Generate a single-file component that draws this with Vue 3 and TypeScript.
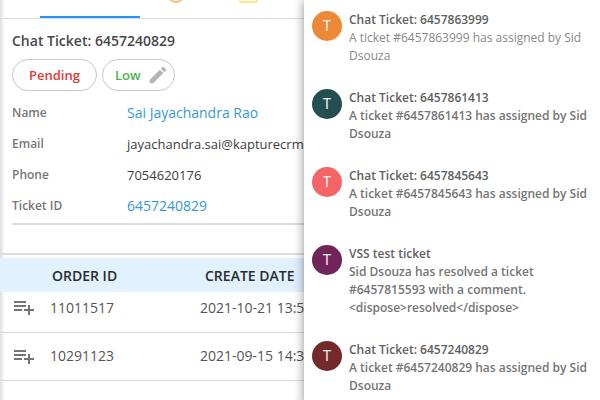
<script setup lang="ts">
interface Order {
  id: string
  created: string
}

interface Notice {
  title: string
  text: string
  color: string
  read?: boolean
}

const orders: Order[] = [
  { id: '11011517', created: '2021-10-21 13:5' },
  { id: '10291123', created: '2021-09-15 14:3' },
]

const notices: Notice[] = [
  { title: 'Chat Ticket: 6457863999', text: 'A ticket #6457863999 has assigned by Sid Dsouza', color: '#ed8936', read: true },
  { title: 'Chat Ticket: 6457861413', text: 'A ticket #6457861413 has assigned by Sid Dsouza', color: '#234e52' },
  { title: 'Chat Ticket: 6457845643', text: 'A ticket #6457845643 has assigned by Sid Dsouza', color: '#f56565' },
  { title: 'VSS test ticket', text: 'Sid Dsouza has resolved a ticket #6457815593 with a comment. <dispose>resolved</dispose>', color: '#702459' },
  { title: 'Chat Ticket: 6457240829', text: 'A ticket #6457240829 has assigned by Sid Dsouza', color: '#742a2a' },
]
</script>

<template>
  <div class="page">
    <main class="ticket">
      <nav class="tabs">
        <a href="#" class="tab active" aria-label="Details"></a>
        <a href="#" class="tab" aria-label="History">
          <svg class="tab-icon" width="20" height="20" viewBox="0 0 20 20" fill="none" stroke="#ffbd75" stroke-width="2">
            <circle cx="10" cy="10" r="8" />
            <path d="M10 5v5l3 2" />
          </svg>
        </a>
        <a href="#" class="tab" aria-label="Notes">
          <svg class="tab-icon" width="20" height="20" viewBox="0 0 20 20" fill="none" stroke="#ffe68a" stroke-width="2">
            <rect x="2" y="2" width="17" height="16" rx="1" />
          </svg>
        </a>
      </nav>

      <section class="summary">
        <h1>Chat Ticket: 6457240829</h1>
        <div class="pills">
          <button type="button" class="pill pending">Pending</button>
          <button type="button" class="pill low">
            Low
            <svg width="22" height="22" viewBox="0 0 24 24" fill="#b5b5b5">
              <path d="M3 17.25V21h3.75L17.81 9.94l-3.75-3.75L3 17.25zM20.71 7.04a1 1 0 0 0 0-1.41l-2.34-2.34a1 1 0 0 0-1.41 0l-1.83 1.83 3.75 3.75 1.83-1.83z" />
            </svg>
          </button>
        </div>
        <dl class="details">
          <dt>Name</dt>
          <dd><a href="#">Sai Jayachandra Rao</a></dd>
          <dt>Email</dt>
          <dd class="plain">jayachandra.sai@kapturecrm.</dd>
          <dt>Phone</dt>
          <dd class="plain">7054620176</dd>
          <dt>Ticket ID</dt>
          <dd><a href="#">6457240829</a></dd>
        </dl>
      </section>

      <section class="orders">
        <table>
          <thead>
            <tr>
              <th class="action"></th>
              <th class="order">ORDER ID</th>
              <th class="date">CREATE DATE</th>
            </tr>
          </thead>
          <tbody>
            <tr v-for="order in orders" :key="order.id">
              <td class="action">
                <button type="button" class="add" aria-label="Add order">
                  <svg width="24" height="24" viewBox="0 0 24 24" fill="#757575">
                    <path d="M14 10H2v2h12v-2zm0-4H2v2h12V6zm4 8v-4h-2v4h-4v2h4v4h2v-4h4v-2h-4zM2 16h8v-2H2v2z" />
                  </svg>
                </button>
              </td>
              <td class="order">{{ order.id }}</td>
              <td class="date">{{ order.created }}</td>
            </tr>
          </tbody>
        </table>
      </section>
    </main>

    <aside class="notices">
      <article v-for="notice in notices" :key="notice.title" class="notice" :class="{ read: notice.read }">
        <span class="avatar" :style="{ background: notice.color }">T</span>
        <div class="body">
          <h2>{{ notice.title }}</h2>
          <p>{{ notice.text }}</p>
        </div>
      </article>
    </aside>
  </div>
</template>

<style>
body {
  margin: 0;
}
</style>

<style scoped>
.page {
  display: grid;
  grid-template-columns: minmax(0, 38fr) minmax(0, 37fr);
  height: 100vh;
  overflow: hidden;
  background: #fff;
  color: #3c3c3c;
  font-family: "Open Sans", "Noto Sans", sans-serif;
}

a {
  color: #3498db;
  text-decoration: none;
}

h1,
h2,
p,
dl,
dd {
  margin: 0;
}

button {
  font: inherit;
  cursor: pointer;
}

.ticket {
  overflow: hidden;
  box-shadow: inset 5px 0 5px -4px #ccc;
}

.tabs {
  display: flex;
  height: 18px;
  padding-left: 40px;
  border-bottom: 1px solid #dcdcdc;
}

.tab {
  display: flex;
  align-items: flex-end;
  justify-content: center;
  box-sizing: border-box;
  width: 72px;
  padding-bottom: 14px;
}

.tab.active {
  width: 100px;
  padding-bottom: 0;
  border-bottom: 2px solid #2593fc;
}

.tab-icon {
  flex: none;
}

.summary {
  padding: 12px 0 0 12px;
}

h1 {
  font-size: 14px;
  font-weight: 600;
  line-height: 20px;
  color: #484848;
}

.pills {
  display: flex;
  gap: 5px;
  margin-top: 8px;
}

.pill {
  display: flex;
  align-items: center;
  gap: 6px;
  height: 32px;
  padding: 0 16px;
  border: 1px solid #c8c8c8;
  border-radius: 16px;
  background: #fff;
  font-size: 13px;
  font-weight: 600;
}

.pending {
  color: #e53935;
}

.low {
  padding: 0 5px 0 12px;
  color: #4caf50;
}

.details {
  display: grid;
  grid-template-columns: 115px 1fr;
  grid-auto-rows: 31px;
  align-items: center;
  margin-top: 6px;
  padding-bottom: 2px;
  border-bottom: 2px solid #dcdcdc;
  white-space: nowrap;
}

dt {
  color: #777;
  font-size: 12px;
  font-weight: 600;
}

dd {
  font-size: 14px;
}

dd.plain {
  font-size: 13px;
}

.orders {
  margin-top: 28px;
  padding-top: 3px;
  border-top: 2px solid #dcdcdc;
}

table {
  width: 100%;
  border-spacing: 0;
  table-layout: fixed;
  text-align: left;
  white-space: nowrap;
}

th {
  height: 34px;
  padding: 0;
  background: #e1f2fe;
  font-size: 14px;
  font-weight: 600;
  color: #2c2c2c;
}

td {
  height: 45px;
  padding: 0 0 2px;
  border-bottom: 1px solid #dcdcdc;
  color: #555;
  font-size: 14px;
}

tbody tr:first-child td {
  height: 30px;
  padding-bottom: 10px;
}

.action {
  width: 50px;
}

.order {
  width: 150px;
}

th.order {
  padding-left: 2px;
  width: 148px;
}

th.date {
  padding-left: 5px;
}

.add {
  display: flex;
  padding: 0 0 0 12px;
  border: 0;
  background: none;
}

.notices {
  position: relative;
  display: flex;
  flex-direction: column;
  gap: 24px;
  padding: 11px 8px;
  background: #fff;
  box-shadow: 0 0 10px rgba(0, 0, 0, 0.45);
}

.notice {
  display: flex;
  gap: 7px;
}

.avatar {
  display: flex;
  flex: none;
  align-items: center;
  justify-content: center;
  width: 30px;
  height: 30px;
  border-radius: 50%;
  color: #f4f4f4;
  font-family: Roboto, "Open Sans", sans-serif;
  font-size: 14px;
}

.body {
  min-width: 0;
  color: #757575;
  font-size: 12px;
  line-height: 18px;
}

h2 {
  color: #606060;
  font-size: 12px;
  font-weight: 600;
}

p {
  font-weight: 600;
}

.read p {
  color: #888;
  font-weight: 400;
}
</style>
